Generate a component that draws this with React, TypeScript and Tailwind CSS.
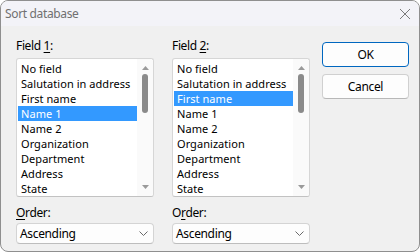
import React from "react";

const font = "font-['Noto_Sans',_'Liberation_Sans',_sans-serif] tracking-[-0.35px]";

const fields = [
  "No field",
  "Salutation in address",
  "First name",
  "Name 1",
  "Name 2",
  "Organization",
  "Department",
  "Address",
  "State",
];

function ListBox({ selected }: { selected: number }) {
  return (
    <div className="flex h-[139px] rounded-[3px] border border-[#d6d6d6] border-b-[#c2c2c2] bg-white">
      <div className="flex-1 pt-[2px] pl-[1px]">
        {fields.map((f, i) => (
          <div
            key={f}
            className={`h-[15px] pl-[3px] text-[11px] leading-[15px] tracking-[0.05px] whitespace-nowrap ${
              i === selected ? "bg-[#3399ff] text-white" : "text-black"
            }`}
          >
            {f}
          </div>
        ))}
      </div>
      {/* scrollbar */}
      <div className="flex w-[16px] flex-col items-center bg-[#fafafa] py-[7px] rounded-r-[3px]">
        <svg width="7" height="4" viewBox="0 0 7 4">
          <path d="M0 4 L3.5 0 L7 4 Z" fill="#9a9a9a" />
        </svg>
        <div className="mt-[4px] h-[39px] w-[6px] rounded-full bg-[#8a8a8a]" />
        <div className="flex-1" />
        <svg width="7" height="4" viewBox="0 0 7 4">
          <path d="M0 0 L3.5 4 L7 0 Z" fill="#9a9a9a" />
        </svg>
      </div>
    </div>
  );
}

function OrderSelect() {
  return (
    <div className="flex h-[21px] items-center justify-between rounded-[4px] border border-[#d4d4d4] border-b-[#bdbdbd] bg-[#fdfdfd] pl-[3px] pr-[5px]">
      <span className="text-[12px] text-black">Ascending</span>
      <svg width="9" height="5" viewBox="0 0 9 5">
        <path d="M0.5 0.5 L4.5 4.5 L8.5 0.5" stroke="#6a6a6a" strokeWidth="1" fill="none" />
      </svg>
    </div>
  );
}

function Column({ label, ul, rest, order, selected }: { label: string; ul: string; rest: string; order: [string, string, string]; selected: number }) {
  return (
    <div className="flex w-[138px] flex-col">
      <div className="h-[16px] text-[12px] leading-[16px] text-black">
        {label}
        <span className="underline underline-offset-2">{ul}</span>
        {rest}
      </div>
      <div className="mt-[4px]">
        <ListBox selected={selected} />
      </div>
      <div className="mt-[8px] h-[16px] text-[12px] leading-[16px] text-black">
        {order[0]}
        <span className="underline underline-offset-2">{order[1]}</span>
        {order[2]}
      </div>
      <div className="mt-[2px]">
        <OrderSelect />
      </div>
    </div>
  );
}

export default function App() {
  return (
    <div className={`${font} h-[252px] w-[420px] bg-white`}>
      <div className="flex h-full flex-col overflow-hidden rounded-[8px] border border-[#8f8f8f] bg-[#f0f0f0]">
        {/* title bar */}
        <div className="flex h-[25px] shrink-0 items-center justify-between bg-[#f3f3f8] pl-[4px] pr-[8px]">
          <span className="text-[12px] text-[#707070]">Sort database</span>
          <svg width="12" height="12" viewBox="0 0 12 12">
            <path d="M1 1 L11 11 M11 1 L1 11" stroke="#7a7a7a" strokeWidth="1" />
          </svg>
        </div>

        {/* body */}
        <div className="flex flex-1 pl-[15px] pr-[8px] pt-[12px]">
          <Column label="Field " ul="1" rest=":" order={["", "O", "rder:"]} selected={3} />
          <div className="ml-[18px]">
            <Column label="Field " ul="2" rest=":" order={["O", "r", "der:"]} selected={2} />
          </div>
          <div className="ml-[12px] flex flex-col gap-[7px] pt-[4px]">
            <button className="h-[25px] w-[87px] rounded-[4px] border border-[#0067c0] bg-[#fdfdfd] text-[12px] text-black">
              OK
            </button>
            <button className="h-[25px] w-[87px] rounded-[4px] border border-[#d0d0d0] border-b-[#b8b8b8] bg-[#fdfdfd] text-[12px] text-black">
              Cancel
            </button>
          </div>
        </div>
      </div>
    </div>
  );
}
